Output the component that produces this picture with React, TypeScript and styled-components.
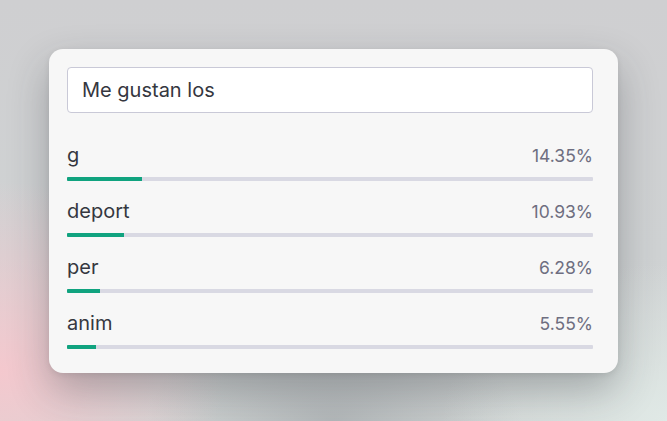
import React from 'react'
import styled, { createGlobalStyle } from 'styled-components'

interface Guess {
  token: string
  pct: number
}

const guesses: Guess[] = [
  { token: 'g', pct: 14.35 },
  { token: 'deport', pct: 10.93 },
  { token: 'per', pct: 6.28 },
  { token: 'anim', pct: 5.55 },
]

const App = () => {
  return (
    <>
      <GlobalStyle />
      <Page>
        <Card>
          <PromptInput defaultValue='Me gustan los' />
          <List>
            {guesses.map((g) => (
              <Row key={g.token}>
                <RowHead>
                  <Token>{g.token}</Token>
                  <Pct>{g.pct.toFixed(2)}%</Pct>
                </RowHead>
                <Track>
                  {/* width comes from the data */}
                  <Fill style={{ width: `${g.pct}%` }} />
                </Track>
              </Row>
            ))}
          </List>
        </Card>
      </Page>
    </>
  )
}

export default App

const GlobalStyle = createGlobalStyle`
  * {
    box-sizing: border-box;
  }
  body {
    margin: 0;
    font-family: Inter, 'Noto Sans', sans-serif;
  }
`

const Page = styled.div`
  min-height: 100vh;
  display: flex;
  align-items: center;
  justify-content: center;
  background:
    radial-gradient(ellipse 45% 60% at 0% 88%, rgba(244, 200, 206, 1), transparent 75%),
    radial-gradient(ellipse 45% 50% at 100% 100%, rgba(224, 233, 230, 1), transparent 75%),
    radial-gradient(ellipse 35% 30% at 50% 100%, rgba(165, 170, 173, 0.7), transparent 80%),
    linear-gradient(180deg, #cfcfd1 0%, #cfd2d3 60%, #d3d7d6 100%);
`

const Card = styled.div`
  width: 569px;
  background-color: #f7f7f7;
  border-radius: 14px;
  padding: 18px 25px 24px 18px;
  box-shadow:
    0 18px 40px rgba(40, 44, 50, 0.3),
    0 2px 6px rgba(0, 0, 0, 0.08);
`

const PromptInput = styled.input`
  display: block;
  width: 100%;
  height: 46px;
  margin: 0;
  padding: 0 14px;
  border: 1px solid #c9c9d7;
  border-radius: 4px;
  background: #fff;
  font-family: inherit;
  font-size: 20px;
  color: #353740;
  outline: none;
`

const List = styled.div`
  display: flex;
  flex-direction: column;
  gap: 16px;
  margin-top: 28px;
`

const Row = styled.div`
  display: flex;
  flex-direction: column;
  gap: 8px;
`

const RowHead = styled.div`
  display: flex;
  justify-content: space-between;
  align-items: baseline;
  height: 28px;
  line-height: 28px;
`

const Token = styled.span`
  font-size: 20px;
  color: #353740;
`

const Pct = styled.span`
  font-size: 17.5px;
  color: #6e6e80;
`

const Track = styled.div`
  height: 4px;
  border-radius: 1px;
  background-color: #d9d9e3;
  overflow: hidden;
`

const Fill = styled.div`
  height: 100%;
  background-color: #10a37f;
`
